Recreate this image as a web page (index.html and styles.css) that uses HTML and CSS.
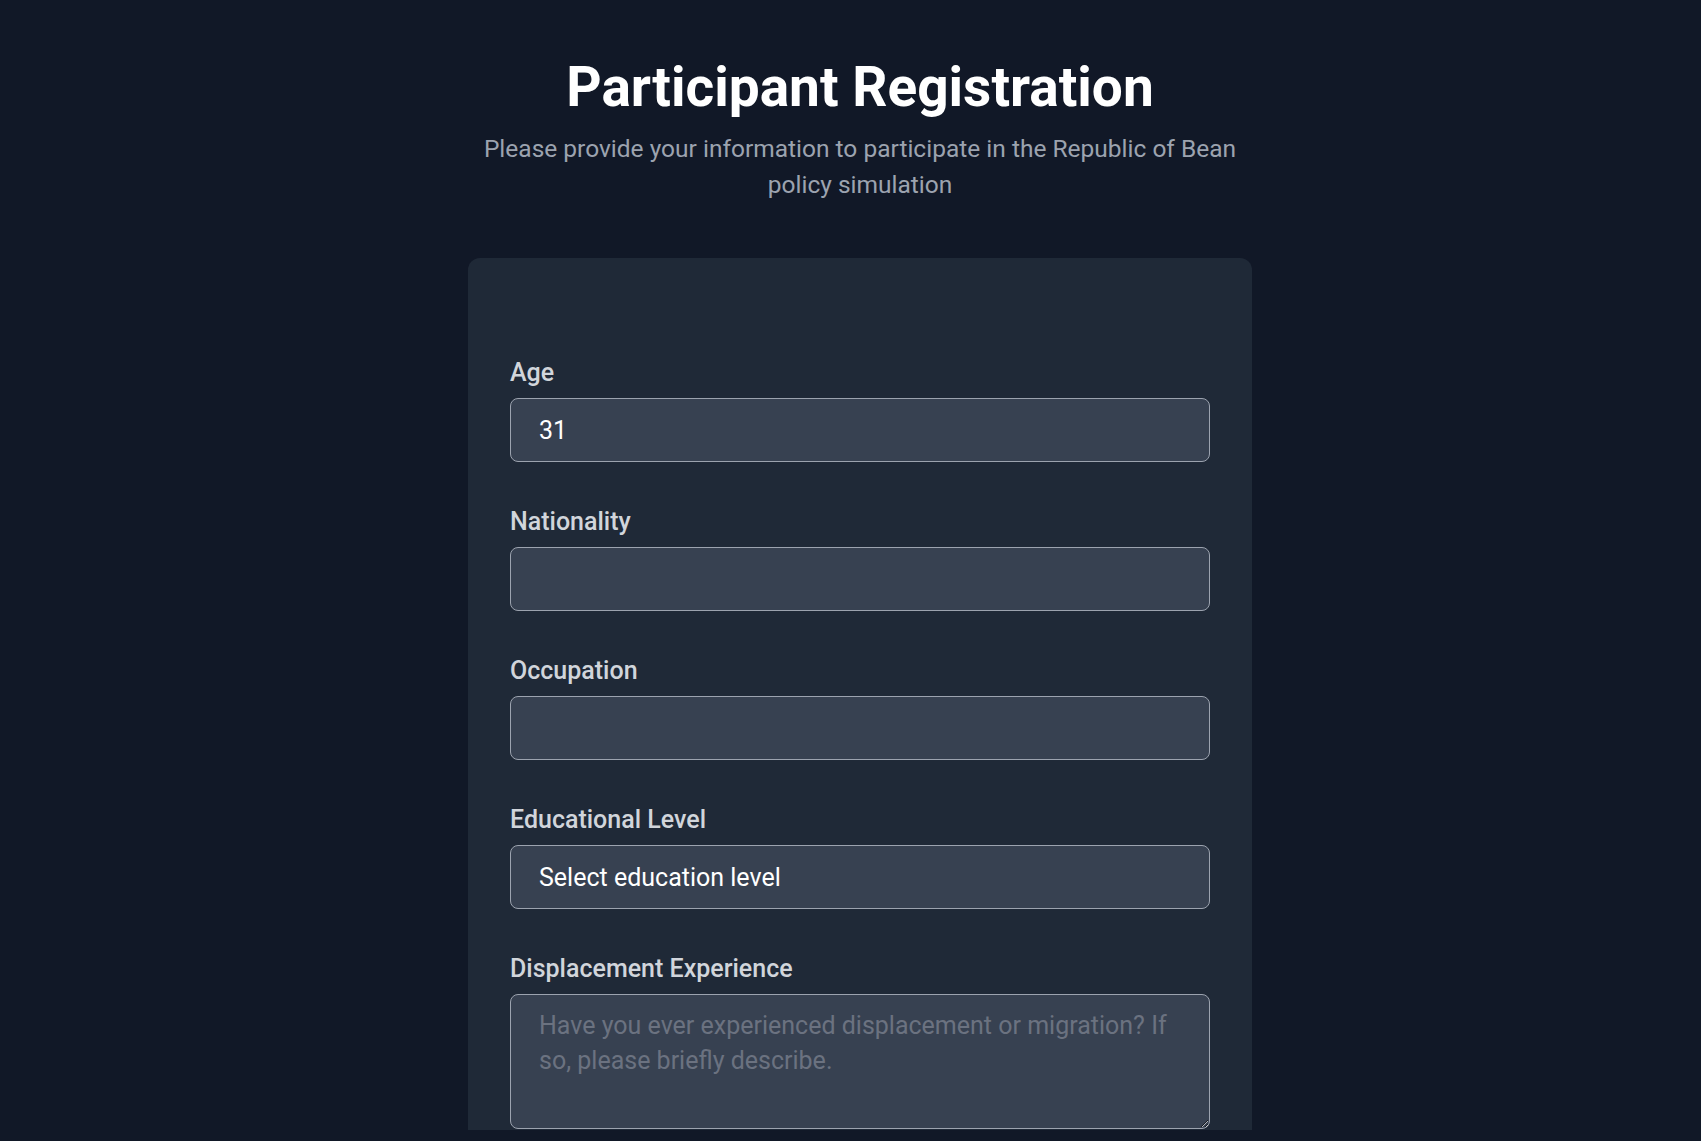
FILE: index.html
```html
<!DOCTYPE html>
<html lang="en">
<head>
<meta charset="utf-8">
<title>Participant Registration</title>
<link rel="stylesheet" href="styles.css">
</head>
<body>
<main class="page">
  <header class="header">
    <h1 class="title">Participant Registration</h1>
    <p class="subtitle">Please provide your information to participate in the Republic of Bean policy simulation</p>
  </header>
  <form class="card">
    <div class="field">
      <label class="label" for="age">Age</label>
      <input class="control" id="age" type="text" value="31">
    </div>
    <div class="field">
      <label class="label" for="nat">Nationality</label>
      <input class="control" id="nat" type="text">
    </div>
    <div class="field">
      <label class="label" for="occ">Occupation</label>
      <input class="control" id="occ" type="text">
    </div>
    <div class="field">
      <label class="label" for="edu">Educational Level</label>
      <select class="control select" id="edu">
        <option>Select education level</option>
      </select>
    </div>
    <div class="field">
      <label class="label" for="disp">Displacement Experience</label>
      <textarea class="control area" id="disp" placeholder="Have you ever experienced displacement or migration? If so, please briefly describe."></textarea>
    </div>
  </form>
</main>
</body>
</html>
```

FILE: styles.css
```css
html, body {
  margin: 0;
  padding: 0;
  background: #111827;
}
body {
  font-family: Roboto, "Liberation Sans", sans-serif;
  overflow: hidden;
  height: 1141px;
}
.page {
  height: 1130px;
  overflow: hidden;
  padding-left: 19px;
  display: flex;
  flex-direction: column;
  align-items: center;
}
.header {
  width: 784px;
  text-align: center;
  padding-top: 58px;
}
.title {
  margin: 0;
  font-size: 55px;
  line-height: 58px;
  font-weight: 700;
  color: #ffffff;
}
.subtitle {
  margin: 15px 0 0;
  font-size: 24.5px;
  line-height: 36px;
  color: #9ca3af;
}
.card {
  box-sizing: border-box;
  width: 784px;
  margin-top: 55px;
  background: #1f2937;
  border-radius: 12px;
  padding: 101px 42px 40px;
  display: flex;
  flex-direction: column;
  gap: 46px;
  flex-shrink: 0;
}
.field {
  display: flex;
  flex-direction: column;
}
.label {
  font-size: 25px;
  line-height: 28px;
  font-weight: 500;
  color: #d1d5db;
  margin-bottom: 11px;
}
.control {
  box-sizing: border-box;
  width: 100%;
  height: 64px;
  background: #374151;
  border: 1px solid #9ca3af;
  border-radius: 8px;
  padding: 0 28px;
  font-family: Roboto, "Liberation Sans", sans-serif;
  font-size: 25px;
  color: #ffffff;
  outline: none;
}
.select {
  appearance: none;
  -webkit-appearance: none;
}
.area {
  height: 135px;
  padding: 13px 28px;
  line-height: 35px;
  resize: vertical;
}
.area::placeholder {
  color: #6b7280;
}
```
